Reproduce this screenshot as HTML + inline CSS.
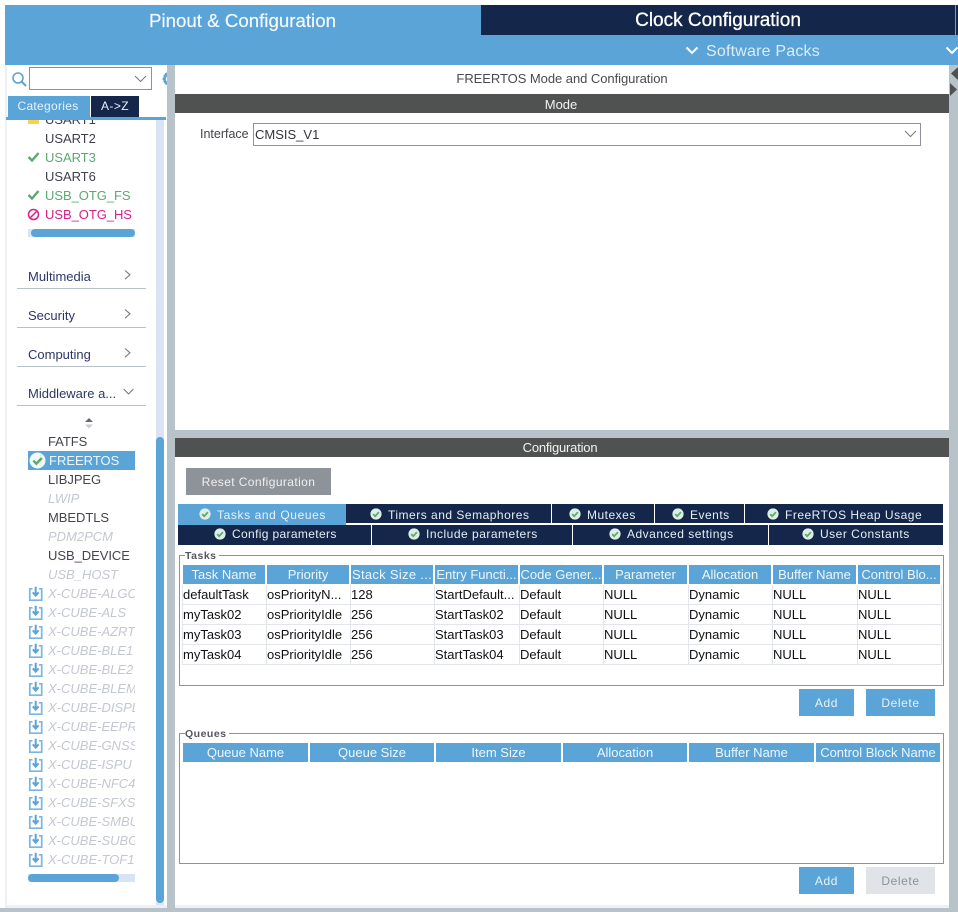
<!DOCTYPE html>
<html><head><meta charset="utf-8"><style>
html,body{margin:0;padding:0;background:#fff}
#p{position:relative;width:958px;height:912px;overflow:hidden;background:#fff;font-family:"Liberation Sans",sans-serif;font-size:13px}
#p div,#p svg{position:absolute}
.t{white-space:nowrap;line-height:19px;height:19px}
.b{background:#5ba4d7}
.d{background:#14274a}
.c{text-align:center;color:#eef6fc;line-height:19px;height:19px;white-space:nowrap;overflow:hidden}
.i{left:45px;color:#3f3f4c;letter-spacing:-.05px}
.g{color:#5aa96f}
.m{left:48px;color:#44444c;letter-spacing:-.05px}
.x{left:48px;width:87px;overflow:hidden;color:#c3c7cf;font-style:italic}
.cat{left:28px;color:#2e3766;font-size:13px}
.ln{left:17px;width:129px;height:1px;background:#b8c0c8}
.tl{color:#e6edf5;font-size:12px;letter-spacing:.5px}
.cell{color:#111;white-space:nowrap;line-height:19px;height:19px}
.h{height:1px;left:183px;width:758px;background:#e2e6ea}
.v{width:1px;top:585px;height:80px;background:#e2e6ea}
.btn{color:#e8f2fa;text-align:center;line-height:29px;height:27px;font-size:12px;letter-spacing:.6px}
.fs{border:1px solid #8f9299;left:179px;width:765px;box-sizing:border-box}
.lg{left:185px;background:#fff;padding-right:2px;font-weight:bold;font-size:10.5px;letter-spacing:.5px;color:#555560;line-height:12px;height:12px}
</style></head><body><div id="p">
<svg width="0" height="0" style="width:0;height:0"><defs>
<g id="dl"><path d="M4.500 2.800H1.800V14.200H13.700V2.800H11" fill="none" stroke="#7ab6e1" stroke-width="1.700"/><path d="M7.700 .8V9M4.800 6.300L7.700 9.600L10.600 6.300" fill="none" stroke="#5ba4d7" stroke-width="2"/></g>
<g id="ck"><circle cx="6" cy="6" r="5.600" fill="#dfeee4"/><path d="M3.200 6.100L5.200 8.200L8.900 4.200" fill="none" stroke="#5aa96f" stroke-width="1.800"/></g>
</defs></svg>

<div class="b" style="left:5px;top:5px;width:953px;height:60px"></div>
<div class="d" style="left:481px;top:5px;width:474px;height:30px"></div>
<div class="d" style="left:956px;top:5px;width:2px;height:30px"></div>
<div class="t" style="left:5px;width:475px;top:11px;text-align:center;color:#f4f9fd;font-size:18.700px;-webkit-text-stroke:.2px #f4f9fd">Pinout &amp; Configuration</div>
<div class="t" style="left:481px;width:474px;top:11px;text-align:center;color:#fff;font-size:19px;-webkit-text-stroke:.3px #fff">Clock Configuration</div>
<svg style="left:685px;top:46px" width="14" height="10"><path d="M1.500 1.500L7 7L12.500 1.500" fill="none" stroke="#fff" stroke-width="2"/></svg>
<div class="t" style="left:706px;top:42px;color:#dcecf8;font-size:16px;letter-spacing:.2px">Software Packs</div>
<svg style="left:945px;top:46px" width="13" height="10"><path d="M1.500 1.500L7 7L12.500 1.500" fill="none" stroke="#fff" stroke-width="2"/></svg>

<div style="left:5px;top:65px;width:2px;height:843px;background:#eef0f5"></div>
<div style="left:167px;top:65px;width:8px;height:847px;background:#b8c2c9"></div>
<div style="left:949px;top:65px;width:9px;height:847px;background:#b8c2c9"></div>
<div style="left:0;top:908px;width:958px;height:4px;background:#b8c2c9"></div>
<div style="left:5px;top:905px;width:162px;height:3px;background:#eef0f5"></div>
<div style="left:175px;top:905px;width:774px;height:3px;background:#eef0f5"></div>

<svg style="left:950px;top:66px" width="8" height="32"><path d="M8 1L1 7.500L8 14Z" fill="#505251"/><path d="M0 17L7 23.500L0 30Z" fill="#505251"/></svg>

<svg style="left:11px;top:71px" width="17" height="17"><circle cx="7" cy="7" r="5" fill="none" stroke="#5ba4d7" stroke-width="1.600"/><path d="M10.500 10.500L15 15" stroke="#5ba4d7" stroke-width="2"/></svg>
<div style="left:29px;top:67px;width:123px;height:23px;box-sizing:border-box;border:1px solid #8f9299"></div>
<svg style="left:134px;top:75px" width="13" height="8"><path d="M1 1L6.500 6.500L12 1" fill="none" stroke="#77797f" stroke-width="1"/></svg>
<svg style="left:162px;top:71px" width="5" height="15"><path d="M5 1.500C2 2 3 4 1.500 4.500V6.500C0 7.500 0 8.500 1.500 9.500V11C3 12 2.500 13.500 5 14V10.500C3.500 10 3.500 6 5 5.500Z" fill="#5ba4d7"/></svg>

<div class="b" style="left:8px;top:96px;width:82px;height:21px"></div>
<div class="t" style="left:7px;width:82px;top:97px;text-align:center;color:#e8f2fa;font-size:12px;letter-spacing:.3px">Categories</div>
<div class="d" style="left:91px;top:96px;width:48px;height:21px"></div>
<div class="t" style="left:91px;width:48px;top:97px;text-align:center;color:#e8eef6;font-size:12px;letter-spacing:.4px">A-&gt;Z</div>
<div class="b" style="left:6px;top:117px;width:160px;height:3px"></div>
<div style="left:156px;top:120px;width:8px;height:785px;background:#d8e4f3"></div>
<div class="b" style="left:156px;top:437px;width:8px;height:466px;border-radius:4px"></div>

<div style="left:28px;top:120px;width:11px;height:4px;background:#f8d24a"></div>
<div style="left:45px;top:120px;width:70px;height:5px;overflow:hidden"><div class="t i" style="left:0;top:-10px">USART1</div></div>
<div class="t i" style="top:129px">USART2</div>
<svg style="left:27px;top:151px" width="13" height="12"><path d="M1.500 6L5 9.500L11.500 2" fill="none" stroke="#5aa96f" stroke-width="2.400"/></svg>
<div class="t i g" style="top:148px">USART3</div>
<div class="t i" style="top:167px">USART6</div>
<svg style="left:27px;top:189px" width="13" height="12"><path d="M1.500 6L5 9.500L11.500 2" fill="none" stroke="#5aa96f" stroke-width="2.400"/></svg>
<div class="t i g" style="top:186px">USB_OTG_FS</div>
<svg style="left:27px;top:208px" width="13" height="13"><circle cx="6.500" cy="6.500" r="5" fill="none" stroke="#d81f87" stroke-width="1.500"/><path d="M3 10L10 3" stroke="#d81f87" stroke-width="1.500"/></svg>
<div class="t i" style="top:205px;color:#d81f87">USB_OTG_HS</div>
<div style="left:28px;top:229px;width:107px;height:8px;background:#d8e4f3"></div>
<div class="b" style="left:31px;top:229px;width:104px;height:8px;border-radius:4px"></div>

<div class="t cat" style="top:267px">Multimedia</div>
<svg style="left:124px;top:270px" width="8" height="10"><path d="M1 .5L6 4.800L1 9.200" fill="none" stroke="#77797f" stroke-width="1.100"/></svg>
<div class="ln" style="top:288px"></div>
<div class="t cat" style="top:306px">Security</div>
<svg style="left:124px;top:309px" width="8" height="10"><path d="M1 .5L6 4.800L1 9.200" fill="none" stroke="#77797f" stroke-width="1.100"/></svg>
<div class="ln" style="top:327px"></div>
<div class="t cat" style="top:345px">Computing</div>
<svg style="left:124px;top:348px" width="8" height="10"><path d="M1 .5L6 4.800L1 9.200" fill="none" stroke="#77797f" stroke-width="1.100"/></svg>
<div class="ln" style="top:366px"></div>
<div class="t cat" style="top:384px">Middleware a...</div>
<svg style="left:123px;top:388px" width="11" height="8"><path d="M.7 1L5.500 6L10.300 1" fill="none" stroke="#77797f" stroke-width="1.100"/></svg>
<div class="ln" style="top:405px"></div>

<svg style="left:84px;top:417px" width="10" height="13"><path d="M1 5L5 1L9 5Z" fill="#666a70"/><path d="M1 7.500L5 11.500L9 7.500Z" fill="#c8cbd0"/></svg>
<div class="t m" style="top:432px">FATFS</div>
<div class="b" style="left:28px;top:451px;width:107px;height:19px"></div>
<svg style="left:29px;top:452px" width="17" height="17"><circle cx="8.500" cy="8.500" r="8" fill="#f2f8f4"/><path d="M4.300 8.700L7.400 11.700L12.800 6" fill="none" stroke="#5aa96f" stroke-width="2.400"/></svg>
<div class="t" style="left:49px;top:451px;color:#eef6fc">FREERTOS</div>
<div class="t m" style="top:470px">LIBJPEG</div>
<div class="t x" style="top:489px">LWIP</div>
<div class="t m" style="top:508px">MBEDTLS</div>
<div class="t x" style="top:527px">PDM2PCM</div>
<div class="t m" style="top:546px">USB_DEVICE</div>
<div class="t x" style="top:565px">USB_HOST</div>

<svg style="left:28px;top:586px" width="16" height="16"><use href="#dl"/></svg><div class="t x" style="top:584px">X-CUBE-ALGOBUILD</div>
<svg style="left:28px;top:605px" width="16" height="16"><use href="#dl"/></svg><div class="t x" style="top:603px">X-CUBE-ALS</div>
<svg style="left:28px;top:624px" width="16" height="16"><use href="#dl"/></svg><div class="t x" style="top:622px">X-CUBE-AZRTOS</div>
<svg style="left:28px;top:643px" width="16" height="16"><use href="#dl"/></svg><div class="t x" style="top:641px">X-CUBE-BLE1</div>
<svg style="left:28px;top:662px" width="16" height="16"><use href="#dl"/></svg><div class="t x" style="top:660px">X-CUBE-BLE2</div>
<svg style="left:28px;top:681px" width="16" height="16"><use href="#dl"/></svg><div class="t x" style="top:679px">X-CUBE-BLEMGR</div>
<svg style="left:28px;top:700px" width="16" height="16"><use href="#dl"/></svg><div class="t x" style="top:698px">X-CUBE-DISPLAY</div>
<svg style="left:28px;top:719px" width="16" height="16"><use href="#dl"/></svg><div class="t x" style="top:717px">X-CUBE-EEPRMA1</div>
<svg style="left:28px;top:738px" width="16" height="16"><use href="#dl"/></svg><div class="t x" style="top:736px">X-CUBE-GNSS1</div>
<svg style="left:28px;top:757px" width="16" height="16"><use href="#dl"/></svg><div class="t x" style="top:755px">X-CUBE-ISPU</div>
<svg style="left:28px;top:776px" width="16" height="16"><use href="#dl"/></svg><div class="t x" style="top:774px">X-CUBE-NFC4</div>
<svg style="left:28px;top:795px" width="16" height="16"><use href="#dl"/></svg><div class="t x" style="top:793px">X-CUBE-SFXS2LP1</div>
<svg style="left:28px;top:814px" width="16" height="16"><use href="#dl"/></svg><div class="t x" style="top:812px">X-CUBE-SMBUS</div>
<svg style="left:28px;top:833px" width="16" height="16"><use href="#dl"/></svg><div class="t x" style="top:831px">X-CUBE-SUBG2</div>
<svg style="left:28px;top:852px" width="16" height="16"><use href="#dl"/></svg><div class="t x" style="top:850px">X-CUBE-TOF1</div>
<div style="left:28px;top:874px;width:107px;height:8px;background:#d8e4f3"></div>
<div class="b" style="left:28px;top:874px;width:91px;height:8px;border-radius:4px"></div>

<div class="t" style="left:175px;width:774px;top:69px;text-align:center;color:#4a4a50;font-size:13px;letter-spacing:-.05px">FREERTOS Mode and Configuration</div>
<div style="left:175px;top:94px;width:774px;height:19px;background:#505251"></div>
<div class="t" style="left:175px;width:774px;top:95px;text-align:center;color:#f2f2f2;font-size:13px;padding-right:2px;box-sizing:border-box">Mode</div>
<div class="t" style="left:200px;top:125px;color:#44444c;font-size:12.500px">Interface</div>
<div style="left:253px;top:123px;width:668px;height:23px;box-sizing:border-box;border:1px solid #8f9299"></div>
<div class="t" style="left:255px;top:125px;color:#33333a;font-size:13px">CMSIS_V1</div>
<svg style="left:904px;top:130px" width="13" height="8"><path d="M1 1L6.500 6.500L12 1" fill="none" stroke="#77797f" stroke-width="1"/></svg>

<div style="left:175px;top:430px;width:774px;height:8px;background:#b8c2c9"></div>
<div style="left:175px;top:438px;width:774px;height:19px;background:#505251"></div>
<div class="t" style="left:175px;width:770px;top:438px;text-align:center;color:#f2f2f2;font-size:13px;letter-spacing:-.2px">Configuration</div>

<div class="btn" style="left:186px;top:468px;width:145px;background:#8e9299;color:#eef0f2;letter-spacing:.4px">Reset Configuration</div>

<div class="d" style="left:178px;top:504px;width:765px;height:19px"></div>
<div class="d" style="left:178px;top:525px;width:765px;height:20px"></div>
<div class="b" style="left:178px;top:504px;width:168px;height:21px"></div>
<div style="left:551px;top:504px;width:1px;height:19px;background:#fff"></div>
<div style="left:654px;top:504px;width:1px;height:19px;background:#fff"></div>
<div style="left:744px;top:504px;width:1px;height:19px;background:#fff"></div>
<div style="left:371px;top:525px;width:1px;height:20px;background:#fff"></div>
<div style="left:572px;top:525px;width:1px;height:20px;background:#fff"></div>
<div style="left:768px;top:525px;width:1px;height:20px;background:#fff"></div>

<svg style="left:199px;top:508px" width="12" height="12"><use href="#ck"/></svg><div class="t tl" style="left:217px;top:506px;color:#e6f1fa;letter-spacing:.6px">Tasks and Queues</div>
<svg style="left:370px;top:508px" width="12" height="12"><use href="#ck"/></svg><div class="t tl" style="left:388px;top:506px">Timers and Semaphores</div>
<svg style="left:569px;top:508px" width="12" height="12"><use href="#ck"/></svg><div class="t tl" style="left:587px;top:506px">Mutexes</div>
<svg style="left:672px;top:508px" width="12" height="12"><use href="#ck"/></svg><div class="t tl" style="left:690px;top:506px">Events</div>
<svg style="left:767px;top:508px" width="12" height="12"><use href="#ck"/></svg><div class="t tl" style="left:785px;top:506px">FreeRTOS Heap Usage</div>
<svg style="left:214px;top:528px" width="12" height="12"><use href="#ck"/></svg><div class="t tl" style="left:232px;top:525px;letter-spacing:.35px">Config parameters</div>
<svg style="left:408px;top:528px" width="12" height="12"><use href="#ck"/></svg><div class="t tl" style="left:426px;top:525px">Include parameters</div>
<svg style="left:609px;top:528px" width="12" height="12"><use href="#ck"/></svg><div class="t tl" style="left:627px;top:525px">Advanced settings</div>
<svg style="left:802px;top:528px" width="12" height="12"><use href="#ck"/></svg><div class="t tl" style="left:820px;top:525px">User Constants</div>

<div class="fs" style="top:555px;height:131px"></div>
<div class="lg" style="top:550px">Tasks</div>
<div class="b c" style="left:183px;top:565px;width:82px">Task Name</div>
<div class="b c" style="left:267px;top:565px;width:82px">Priority</div>
<div class="b c" style="left:351px;top:565px;width:82px;letter-spacing:.3px">Stack Size ...</div>
<div class="b c" style="left:435px;top:565px;width:83px">Entry Functi...</div>
<div class="b c" style="left:520px;top:565px;width:82px">Code Gener...</div>
<div class="b c" style="left:604px;top:565px;width:83px">Parameter</div>
<div class="b c" style="left:689px;top:565px;width:82px">Allocation</div>
<div class="b c" style="left:773px;top:565px;width:83px">Buffer Name</div>
<div class="b c" style="left:858px;top:565px;width:82px">Control Blo...</div>

<div class="h" style="top:604px"></div><div class="h" style="top:624px"></div><div class="h" style="top:644px"></div><div class="h" style="top:664px"></div>
<div class="v" style="left:182px"></div><div class="v" style="left:266px"></div><div class="v" style="left:350px"></div><div class="v" style="left:434px"></div><div class="v" style="left:519px"></div><div class="v" style="left:603px"></div><div class="v" style="left:688px"></div><div class="v" style="left:772px"></div><div class="v" style="left:857px"></div><div class="v" style="left:941px"></div>

<div class="cell" style="left:183px;top:585px">defaultTask</div><div class="cell" style="left:267px;top:585px">osPriorityN...</div><div class="cell" style="left:351px;top:585px">128</div><div class="cell" style="left:435px;top:585px">StartDefault...</div><div class="cell" style="left:520px;top:585px">Default</div><div class="cell" style="left:604px;top:585px">NULL</div><div class="cell" style="left:689px;top:585px">Dynamic</div><div class="cell" style="left:773px;top:585px">NULL</div><div class="cell" style="left:858px;top:585px">NULL</div>
<div class="cell" style="left:183px;top:605px">myTask02</div><div class="cell" style="left:267px;top:605px">osPriorityIdle</div><div class="cell" style="left:351px;top:605px">256</div><div class="cell" style="left:435px;top:605px">StartTask02</div><div class="cell" style="left:520px;top:605px">Default</div><div class="cell" style="left:604px;top:605px">NULL</div><div class="cell" style="left:689px;top:605px">Dynamic</div><div class="cell" style="left:773px;top:605px">NULL</div><div class="cell" style="left:858px;top:605px">NULL</div>
<div class="cell" style="left:183px;top:625px">myTask03</div><div class="cell" style="left:267px;top:625px">osPriorityIdle</div><div class="cell" style="left:351px;top:625px">256</div><div class="cell" style="left:435px;top:625px">StartTask03</div><div class="cell" style="left:520px;top:625px">Default</div><div class="cell" style="left:604px;top:625px">NULL</div><div class="cell" style="left:689px;top:625px">Dynamic</div><div class="cell" style="left:773px;top:625px">NULL</div><div class="cell" style="left:858px;top:625px">NULL</div>
<div class="cell" style="left:183px;top:645px">myTask04</div><div class="cell" style="left:267px;top:645px">osPriorityIdle</div><div class="cell" style="left:351px;top:645px">256</div><div class="cell" style="left:435px;top:645px">StartTask04</div><div class="cell" style="left:520px;top:645px">Default</div><div class="cell" style="left:604px;top:645px">NULL</div><div class="cell" style="left:689px;top:645px">Dynamic</div><div class="cell" style="left:773px;top:645px">NULL</div><div class="cell" style="left:858px;top:645px">NULL</div>

<div class="btn b" style="left:799px;top:689px;width:55px">Add</div>
<div class="btn b" style="left:866px;top:689px;width:69px">Delete</div>

<div class="fs" style="top:733px;height:131px"></div>
<div class="lg" style="top:728px">Queues</div>
<div class="b c" style="left:183px;top:743px;width:125px">Queue Name</div>
<div class="b c" style="left:310px;top:743px;width:124px">Queue Size</div>
<div class="b c" style="left:436px;top:743px;width:125px">Item Size</div>
<div class="b c" style="left:563px;top:743px;width:124px">Allocation</div>
<div class="b c" style="left:689px;top:743px;width:125px">Buffer Name</div>
<div class="b c" style="left:816px;top:743px;width:124px">Control Block Name</div>

<div class="btn b" style="left:799px;top:867px;width:55px">Add</div>
<div class="btn" style="left:866px;top:867px;width:69px;background:#e0e4e8;color:#8a9199">Delete</div>
</div></body></html>
